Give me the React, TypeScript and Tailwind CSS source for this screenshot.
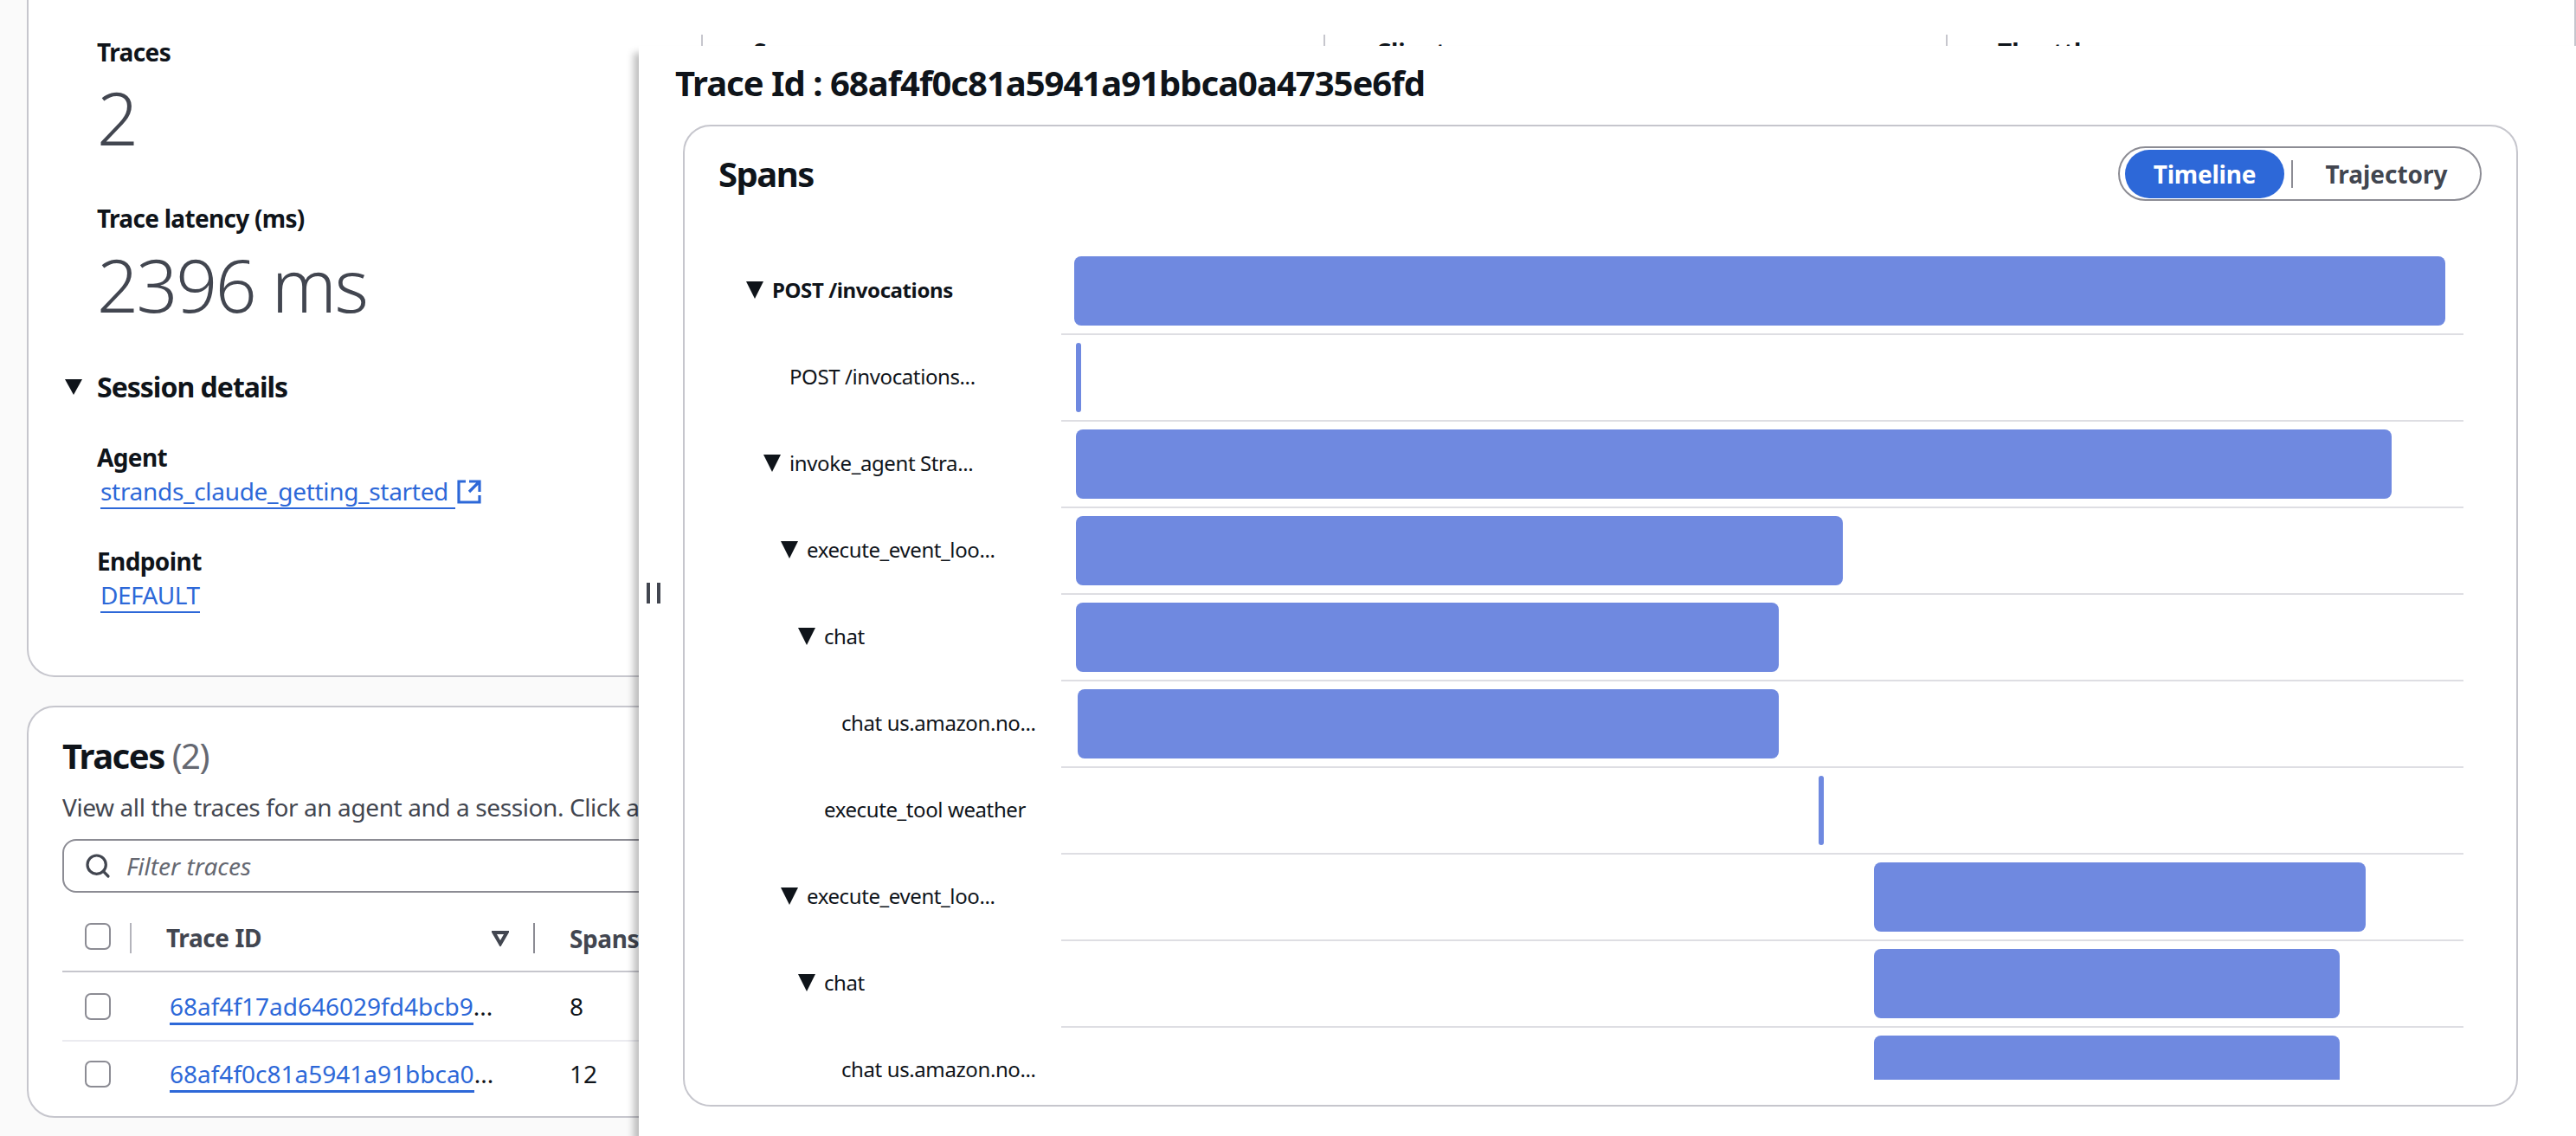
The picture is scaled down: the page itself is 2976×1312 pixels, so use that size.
import { Search } from "lucide-react";

interface Span {
  name: string;
  depth: number;
  start: number;
  width: number;
  bold?: boolean;
  open?: boolean;
}

const spans: Span[] = [
  { name: "POST /invocations", depth: 0, start: 15, width: 1584, bold: true, open: true },
  { name: "POST /invocations...", depth: 1, start: 17, width: 6 },
  { name: "invoke_agent Stra...", depth: 1, start: 17, width: 1520, open: true },
  { name: "execute_event_loo...", depth: 2, start: 17, width: 886, open: true },
  { name: "chat", depth: 3, start: 17, width: 812, open: true },
  { name: "chat us.amazon.no...", depth: 4, start: 19, width: 810 },
  { name: "execute_tool weather", depth: 3, start: 875, width: 6 },
  { name: "execute_event_loo...", depth: 2, start: 939, width: 568, open: true },
  { name: "chat", depth: 3, start: 939, width: 538, open: true },
  { name: "chat us.amazon.no...", depth: 4, start: 939, width: 538 },
];

function Caret() {
  return (
    <svg width="20" height="20" viewBox="0 0 20 20" className="shrink-0">
      <polygon points="0,0 20,0 10,20" fill="#0f141a" />
    </svg>
  );
}

function Checkbox() {
  return <div className="w-[30px] h-[31px] shrink-0 rounded-[7px] border-2 border-[#8c8c94] bg-white" />;
}

function StatHeader({ label }: { label: string }) {
  return (
    <div className="w-[719px] shrink-0 h-[80px] border-l-2 border-[#c6c6cd] pl-[58px] text-[28px] leading-[40px] font-bold">
      {label}
    </div>
  );
}

function TraceRow({ id, spanCount, last }: { id: string; spanCount: number; last?: boolean }) {
  return (
    <div className={last ? "flex items-center h-[74px]" : "flex items-center h-[80px] border-b-2 border-[#ebebf0]"}>
      <div className="w-[80px] pl-[26px]">
        <Checkbox />
      </div>
      <div className="w-[466px] pl-[44px] text-[28px] leading-[36px] whitespace-nowrap">
        <span className="text-[#2d68d8] border-b-[3px] border-[#2d68d8]">{id}</span>...
      </div>
      <div className="pl-[40px] text-[28px] leading-[36px]">{spanCount}</div>
    </div>
  );
}

export default function App() {
  return (
    <div className="relative w-[2976px] h-[1312px] overflow-hidden bg-[#fafafa] pl-[31px] text-[#0f141a] font-['Noto_Sans',sans-serif]">
      {/* session card, scrolled so its top is off the page */}
      <div className="h-[782px] bg-white border-x-2 border-b-2 border-[#c6c6cd] rounded-b-[32px] pt-[40px] flex overflow-hidden">
        <div className="w-[777px] shrink-0 pl-[79px] relative">
          <div className="text-[28px] leading-[40px] font-bold tracking-[-0.6px]">Traces</div>
          <div className="mt-[8px] text-[84px] leading-[96px] font-light tracking-[-2.4px] text-[#424650]">2</div>
          <div className="mt-[48px] text-[28px] leading-[40px] font-bold tracking-[-0.7px]">Trace latency (ms)</div>
          <div className="mt-[9px] text-[84px] leading-[96px] font-light tracking-[-2.4px] text-[#424650]">2396 ms</div>
          <div className="mt-[48px] -ml-[37px] flex items-center gap-[17px]">
            <svg width="20" height="18" viewBox="0 0 20 18" className="shrink-0">
              <polygon points="0,0 20,0 10,18" fill="#0f141a" />
            </svg>
            <span className="text-[32px] leading-[44px] font-bold tracking-[-1px]">Session details</span>
          </div>
          <div className="mt-[39px] text-[28px] leading-[40px] font-bold tracking-[-0.6px]">Agent</div>
          <div className="flex items-start pl-[4px] text-[28px] leading-[38px] tracking-[-0.3px] text-[#2d68d8]">
            <span className="pr-[8px] border-b-2 border-[#2d68d8]">strands_claude_getting_started</span>
            <svg width="28" height="28" viewBox="1 1 14 14" fill="none" stroke="#2d68d8" strokeWidth="1.6" className="ml-[2px] mt-[6px]">
              <path d="M14 8V2H8M14 2 8 8M6 2H2v12h12v-4" />
            </svg>
          </div>
          <div className="mt-[40px] text-[28px] leading-[40px] font-bold tracking-[-0.6px]">Endpoint</div>
          <div className="pl-[4px] text-[28px] leading-[38px] tracking-[-0.5px] text-[#2d68d8]">
            <span className="inline-block border-b-2 border-[#2d68d8]">DEFAULT</span>
          </div>
        </div>
        <StatHeader label="Server errors" />
        <StatHeader label="Client errors" />
        <StatHeader label="Throttles" />
      </div>

      {/* traces table */}
      <div className="mt-[33px] h-[476px] bg-white border-2 border-[#c6c6cd] rounded-[32px] pt-[30px] pl-[39px]">
        <div className="text-[40px] leading-[52px] font-bold tracking-[-1.5px]">
          Traces <span className="font-normal text-[#656871]">(2)</span>
        </div>
        <div className="mt-[13px] text-[28px] leading-[40px] tracking-[-0.4px] text-[#424650] whitespace-nowrap">
          View all the traces for an agent and a session. Click a trace to view its details.
        </div>
        <div className="mt-[17px] h-[62px] border-2 border-[#8c8c94] rounded-[16px] flex items-center pl-[23px] gap-[17px]">
          <Search size={32} strokeWidth={2.4} className="text-[#424650]" />
          <span className="text-[28px] italic text-[#656871]">Filter traces</span>
        </div>
        <div className="mt-[35px] h-[57px] flex items-start border-b-2 border-[#c6c6cd]">
          <div className="w-[80px] h-[35px] pl-[26px] border-r-2 border-[#b4b4bb]">
            <Checkbox />
          </div>
          <div className="w-[466px] h-[35px] pl-[40px] pr-[28px] border-r-2 border-[#8c8c94] flex items-center justify-between">
            <span className="text-[28px] leading-[37px] font-bold tracking-[-0.4px] text-[#424650]">Trace ID</span>
            <svg width="20" height="18" viewBox="0 0 20 18" fill="none" stroke="#424650" strokeWidth="4">
              <polygon points="2.5,2 17.5,2 10,15" />
            </svg>
          </div>
          <div className="pl-[40px] text-[28px] leading-[37px] font-bold tracking-[-0.4px] text-[#424650]">Spans</div>
        </div>
        <TraceRow id="68af4f17ad646029fd4bcb9" spanCount={8} />
        <TraceRow id="68af4f0c81a5941a91bbca0" spanCount={12} last />
      </div>

      {/* trace detail split panel */}
      <div className="absolute left-[738px] top-[53px] right-0 bottom-0 bg-white pl-[51px] pr-[67px] shadow-[-6px_8px_8px_rgba(0,0,0,0.25)]">
        <div className="absolute left-[9px] top-[620px] flex gap-[8px]">
          <div className="w-[4px] h-[24px] bg-[#424650]" />
          <div className="w-[4px] h-[24px] bg-[#424650]" />
        </div>

        <div className="pt-[17px] -ml-[9px] text-[40px] leading-[52px] font-bold tracking-[-1px] whitespace-nowrap">
          Trace Id : 68af4f0c81a5941a91bbca0a4735e6fd
        </div>

        <div className="mt-[22px] h-[1134px] border-2 border-[#c6c6cd] rounded-[32px] pt-[23px]">
          <div className="flex items-center justify-between pl-[39px] pr-[40px]">
            <div className="text-[40px] leading-[52px] font-bold tracking-[-1.5px]">Spans</div>
            <div className="w-[420px] h-[63px] border-2 border-[#8c8c94] rounded-full flex items-center pl-[6px]">
              <div className="w-[184px] h-[56px] rounded-full bg-[#2d68d8] text-white text-[28px] font-bold tracking-[-0.2px] flex items-center justify-center">
                Timeline
              </div>
              <div className="ml-[8px] w-[2px] h-[32px] bg-[#8c8c94]" />
              <div className="flex-1 text-center text-[28px] font-bold text-[#424650]">Trajectory</div>
            </div>
          </div>

          <div className="mt-[55px] mr-[61px] h-[960px] overflow-hidden">
            {spans.map((s, i) => (
              <div key={i} className="flex h-[100px]">
                <div
                  className="w-[435px] shrink-0 flex items-center pb-[4px] whitespace-nowrap text-[24px] tracking-[-0.4px]"
                  style={{ paddingLeft: 71 + s.depth * 20 }}
                >
                  <div className="w-[30px] shrink-0">{s.open && <Caret />}</div>
                  <span className={s.bold ? "font-bold" : ""}>{s.name}</span>
                </div>
                <div className="flex-1 pt-[9px] border-b-2 border-[#dedee3]">
                  <div
                    className={s.width < 10 ? "h-[80px] bg-[#6f89e0] rounded-full" : "h-[80px] bg-[#6f89e0] rounded-[8px]"}
                    style={{ marginLeft: s.start, width: s.width }}
                  />
                </div>
              </div>
            ))}
          </div>
        </div>
      </div>
    </div>
  );
}
